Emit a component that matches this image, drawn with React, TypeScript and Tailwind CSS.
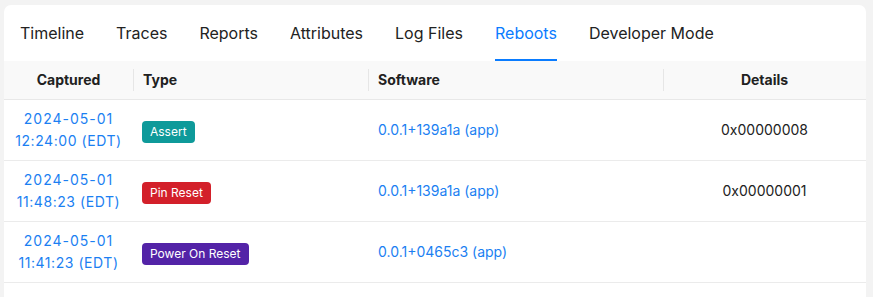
import React from 'react';

type Reboot = {
  date: string;
  time: string;
  type: string;
  badge: string;
  software: string;
  details: string;
};

const tabs = ['Timeline', 'Traces', 'Reports', 'Attributes', 'Log Files', 'Reboots', 'Developer Mode'];

const reboots: Reboot[] = [
  { date: '2024-05-01', time: '12:24:00 (EDT)', type: 'Assert', badge: 'bg-[#0e9a9a]', software: '0.0.1+139a1a (app)', details: '0x00000008' },
  { date: '2024-05-01', time: '11:48:23 (EDT)', type: 'Pin Reset', badge: 'bg-[#d3202a]', software: '0.0.1+139a1a (app)', details: '0x00000001' },
  { date: '2024-05-01', time: '11:41:23 (EDT)', type: 'Power On Reset', badge: 'bg-[#5323a7]', software: '0.0.1+0465c3 (app)', details: '' },
];

const cols = 'grid grid-cols-[129px_235px_295px_1fr]';

const HeaderCell = ({ label, center, divider }: { label: string; center?: boolean; divider?: boolean }) => (
  <div className="relative flex items-center h-full">
    {divider && <div className="absolute left-0 top-2 bottom-2 w-px bg-[#e6e6e6]"></div>}
    <span className={`w-full text-sm font-bold text-[#212121] ${center ? 'text-center' : 'pl-[10px]'}`}>{label}</span>
  </div>
);

const Row = ({ date, time, type, badge, software, details }: Reboot) => (
  <div className={`${cols} h-[61px] border-b border-[#ebebeb] items-center`}>
    <div className="text-center text-sm leading-[22px] text-[#1b7ff2]">
      <div className="tracking-[0.07em]">{date}</div>
      <div className="tracking-[0.04em]">{time}</div>
    </div>
    <div className="pl-[9px]">
      <span className={`inline-flex items-center h-[22px] px-[8px] rounded-[4px] text-xs text-white ${badge}`}>{type}</span>
    </div>
    <div className="pl-[10px] text-sm text-[#1b7ff2]">{software}</div>
    <div className="text-center text-sm text-[#222]">{details}</div>
  </div>
);

export default function App() {
  return (
    <div className="w-[873px] h-[297px] overflow-hidden bg-[#f3f3f3] pt-[5px] pl-[4px] font-['Inter',sans-serif]">
      <div className="w-[862px] h-[320px] bg-white rounded-t-[7px]">
        <div className="flex h-[56px] px-4 gap-8">
          {tabs.map((tab) => (
            <div
              key={tab}
              className={`flex items-center h-full text-base ${
                tab === 'Reboots' ? 'text-[#0a7cff] border-b-2 border-[#0a7cff] pt-[2px]' : 'text-[#222]'
              }`}
            >
              {tab}
            </div>
          ))}
        </div>
        <div className={`${cols} h-[39px] bg-[#f9f9f9] border-b border-[#e8e8e8]`}>
          <HeaderCell label="Captured" center />
          <HeaderCell label="Type" divider />
          <HeaderCell label="Software" divider />
          <HeaderCell label="Details" center divider />
        </div>
        {reboots.map((r, i) => (
          <Row key={i} {...r} />
        ))}
      </div>
    </div>
  );
}
